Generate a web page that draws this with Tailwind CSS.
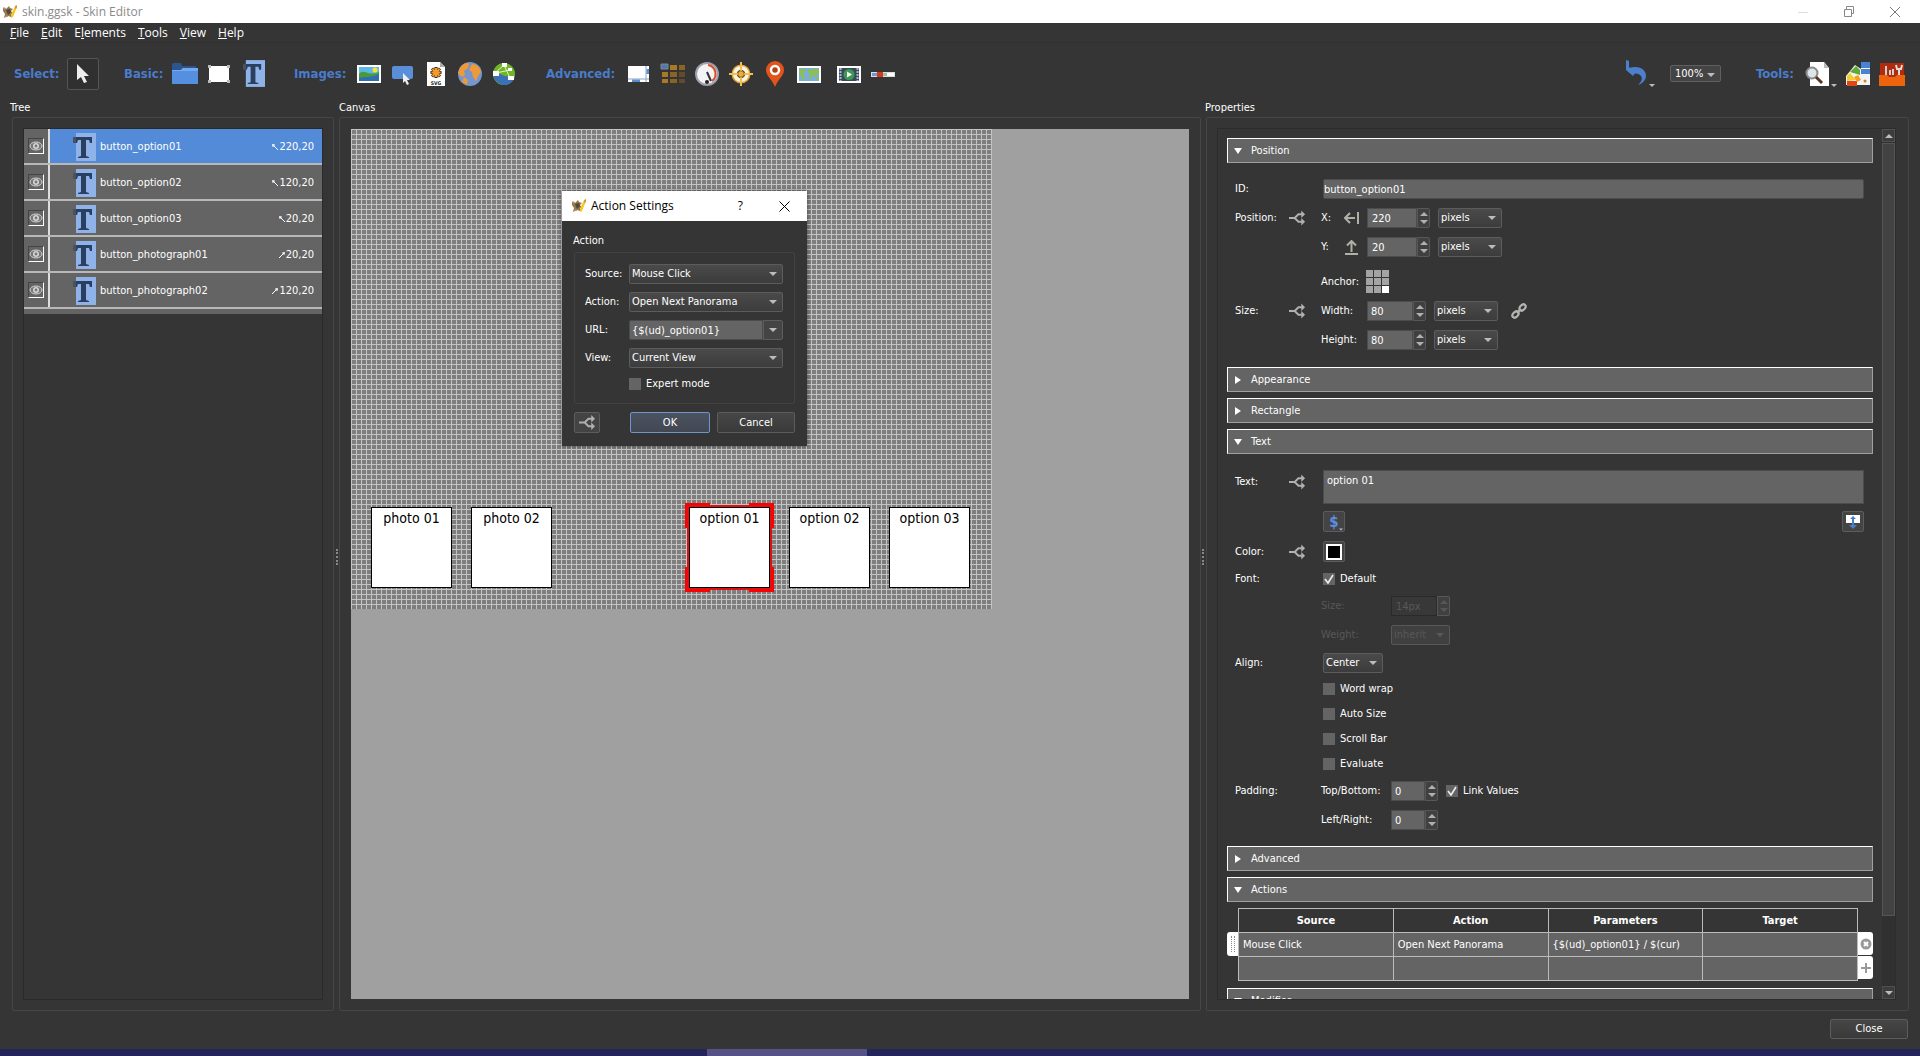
<!DOCTYPE html>
<html lang="en">
<head>
<meta charset="utf-8">
<title>skin.ggsk - Skin Editor</title>
<script src="https://cdn.jsdelivr.net/npm/@tailwindcss/browser@4"></script>
</head>
<body class="flex h-screen flex-col overflow-hidden bg-[#353535] font-['DejaVu_Sans_Condensed','DejaVu_Sans',sans-serif] text-[11px] leading-4 text-white">

<!-- Shared symbols -->
<svg class="hidden">
  <symbol id="logo" viewBox="0 0 16 14"><path d="M1 3l3 1 3-3 1 2 3 1-2 2 3 4-3-1v3l-3-1-4 2 1-4-2-3z" fill="#94784e"/><path d="M4 5l4-1 1 3-3 3z" fill="#54463a"/><path d="M1 2l3 1-1 2zM2 12l3-2 1 2z" fill="#b09468"/><path d="M9 10l4-9 2 1-4 10-2 1z" fill="#f4c820"/><path d="M13 1l2-1v3l-2 1z" fill="#d99a2c"/></symbol>
  <symbol id="tee" viewBox="0 0 24 28"><path d="M4 0h20v28H4z" fill="#8fb2e8"/><path d="M4 4h16v6h-2l-1-3h-3v16l3 1v1H6v-1l3-1V7H6l-1 3H1V4z" fill="#2b3f60"/><path d="M1 4h3v6H1z" fill="#4a5260"/></symbol>
  <symbol id="eye" viewBox="0 0 14 10"><ellipse cx="7" cy="5" rx="6" ry="4" fill="#777" stroke="#d4d4d4"/><circle cx="7" cy="5" r="3" fill="#d4d4d4"/><circle cx="7" cy="5" r="1.4" fill="#777"/></symbol>
  <symbol id="down" viewBox="0 0 8 4"><path d="M0 0h8L4 4z" fill="#bcbcbc"/></symbol>
  <symbol id="spin" viewBox="0 0 8 14"><path d="M0 5h8L4 1zM0 9h8l-4 4z" fill="#b0b0b0"/></symbol>
  <symbol id="branch" viewBox="0 0 18 16"><path d="M0 8h6l4-4h5M6 8l4 4h5" fill="none" stroke="#b0b0b0" stroke-width="2"/><path d="M13 0l4 4-4 4zM13 8l4 4-4 4z" fill="#b0b0b0"/></symbol>
  <symbol id="tri-down" viewBox="0 0 8 8"><path d="M0 1h8L4 7z" fill="#fff"/></symbol>
  <symbol id="tri-right" viewBox="0 0 8 8"><path d="M1 0l6 4-6 4z" fill="#fff"/></symbol>
  <symbol id="nw" viewBox="0 0 6 6"><path d="M1 1l5 5M0 1h3M1 0v3" stroke="#fff" fill="none"/></symbol>
  <symbol id="ne" viewBox="0 0 6 6"><path d="M5 1L0 6M6 1H3M5 0v3" stroke="#fff" fill="none"/></symbol>
  <symbol id="tick" viewBox="0 0 10 10"><path d="M1 5l3 4 5-8" stroke="#eee" stroke-width="1.6" fill="none"/></symbol>
</svg>

<!-- Title bar -->
<header class="flex h-[23px] shrink-0 items-center bg-white pr-5 font-['Open_Sans',sans-serif] text-[12px] text-[#8a8a8a]">
  <svg class="ml-[2px] h-[14px] w-4"><use href="#logo"/></svg>
  <h1 class="ml-1 flex-1">skin.ggsk - Skin Editor</h1>
  <button aria-label="Minimize" class="mr-9"><svg class="h-[10px] w-[10px]"><path d="M0 5.500h10" stroke="#ddd"/></svg></button>
  <button aria-label="Restore" class="mr-9"><svg class="h-[11px] w-[10px]" fill="none" stroke="#888"><path d="M.5 3.500h7v7h-7zM2.500 3V.5h7v7H8"/></svg></button>
  <button aria-label="Close window"><svg class="h-[10px] w-[10px]" stroke="#777"><path d="M0 0l10 10M10 0L0 10"/></svg></button>
</header>

<!-- Menu bar -->
<nav class="flex h-[20px] shrink-0 items-center gap-3 border-b border-[#303030] pl-[10px] font-['Open_Sans',sans-serif] text-[12px]">
  <a href="#"><u>F</u>ile</a><a href="#"><u>E</u>dit</a><a href="#">E<u>l</u>ements</a><a href="#"><u>T</u>ools</a><a href="#"><u>V</u>iew</a><a href="#"><u>H</u>elp</a>
</nav>

<!-- Toolbar -->
<div class="flex h-[59px] shrink-0 items-center pt-[2px] pr-[15px] pl-[14px] text-[13px] font-bold text-[#4a7ccc]">
  <span class="w-[53px]">Select:</span>
  <button aria-label="Select" class="mr-[25px] flex size-8 items-center justify-center rounded-[2px] border border-[#555] bg-[#303030]"><svg class="h-5 w-4" viewBox="0 0 16 20"><path d="M2 0l12 12H9l3 6-3 1-3-6-4 3z" fill="#eee"/></svg></button>
  <span class="w-[44px]">Basic:</span>
  <button aria-label="Container" class="flex w-[34px] justify-center"><svg class="size-[26px]" viewBox="0 0 26 26"><path d="M0 4l1-2h8l1 3h14v6H0z" fill="#2c5590"/><path d="M0 9h9l2-2h15v16H0z" fill="#5590e0"/><path d="M0 9h9l2-2h15v3H0z" fill="#76a8ec"/></svg></button>
  <button aria-label="Rectangle" class="flex w-[34px] justify-center"><svg class="size-[26px]" viewBox="0 0 26 26"><path d="M3 5h20v16H3z" fill="#fff"/><path d="M2 4h3v3H2zM21 4h3v3h-3zM2 19h3v3H2zM21 19h3v3h-3z" fill="#bbb"/></svg></button>
  <button aria-label="Text" class="mr-6 flex w-[34px] justify-center"><svg class="h-[27px] w-[23px]"><use href="#tee"/></svg></button>
  <span class="w-[58px]">Images:</span>
  <button aria-label="Image" class="flex w-[34px] justify-center"><svg class="size-[26px]" viewBox="0 0 26 26"><path d="M1 4h24v18H1z" fill="#fff"/><path d="M3 6h20v14H3z" fill="#5cb9e6"/><path d="M3 13c5-6 8 3 20-2v9H3z" fill="#4a9a3c"/><path d="M3 17c7-2 12 0 20-4v7H3z" fill="#2e6fb0"/><circle cx="19" cy="9" r="2.500" fill="#f8e23a"/></svg></button>
  <button aria-label="Button" class="flex w-[33px] justify-center"><svg class="size-[26px]" viewBox="0 0 26 26"><rect x="2" y="5" width="21" height="13" rx="2" fill="#5b8ed8"/><path d="M13 12l7 7h-3l2 4-2 1-2-4-2 2z" fill="#eee"/></svg></button>
  <button aria-label="SVG" class="flex w-[34px] justify-center"><svg class="size-[26px]" viewBox="0 0 26 26"><path d="M4 1h13l5 5v19H4z" fill="#fff"/><path d="M17 1l5 5h-5z" fill="#aaa"/><g stroke="#3a2a10" stroke-width="3"><path d="M13 6v11M7.500 11.500h11M9 7.500l8 8M17 7.500l-8 8"/></g><g stroke="#f59a2c" stroke-width="2"><path d="M13 7v9M8.500 11.500h9M9.500 8l7 7M16.500 8l-7 7"/></g><text x="13" y="23.500" text-anchor="middle" font-size="5" font-weight="bold" fill="#222">SVG</text></svg></button>
  <button aria-label="External image" class="flex w-[34px] justify-center"><svg class="size-[26px]" viewBox="0 0 26 26"><circle cx="13" cy="13" r="12" fill="#7596cc"/><path d="M3 7c3-5 8-6 9-4l-1 4-4 3 1 4-3 2-4-4zM15 3c5 0 8 4 9 8l-3 4-2 5-3-4-1-5-3-2zM7 16l4 3-1 5-5-3z" fill="#ef9a36"/></svg></button>
  <button aria-label="Panorama link" class="mr-[25px] flex w-[34px] justify-center"><svg class="size-[26px]" viewBox="0 0 26 26"><circle cx="13" cy="13" r="11" fill="#6fb52c"/><path d="M2 13c5-3 8 1 12 2s6-1 10 1c-2 6-7 8-11 8S3 20 2 13z" fill="#3a70b8"/><path d="M4 12l9-8 6 13M5 12l14-3" stroke="#e8f5b0" fill="none"/><path d="M2 10h6v5H2zM11 2h5v4h-5zM17 15h6v4h-6zM17 7h4v3h-4z" fill="#fff"/></svg></button>
  <span class="w-[76px]">Advanced:</span>
  <button aria-label="Scroll area" class="flex w-[34px] justify-center"><svg class="size-[26px]" viewBox="0 0 26 26"><path d="M2 5h21v16H2z" fill="#fff"/><path d="M20 5v16M2 18h21" stroke="#8ca4c8"/><path d="M6 18.500h8V21H6zM20.500 8H23v5h-2.500z" fill="#5a8ed4"/></svg></button>
  <button aria-label="Cloner" class="flex w-[34px] justify-center"><svg class="size-[26px]" viewBox="0 0 26 26"><path d="M1 3h7v5H1z" fill="#4a78b8" stroke="#888"/><path d="M10 4h7v5h-7zM2 11h6v5H2zM2 18h6v4H2z" fill="#a87a28"/><path d="M19 4h6v5h-6zM10 11h7v5h-7zM10 18h7v4h-7z" fill="#8a6424"/><path d="M19 11h6v5h-6zM19 18h6v4h-6z" fill="#64492a"/></svg></button>
  <button aria-label="Timer" class="flex w-[34px] justify-center"><svg class="size-[26px]" viewBox="0 0 26 26"><circle cx="13" cy="13" r="11" fill="#f4f4f4" stroke="#9da0ae" stroke-width="2"/><path d="M14 4a9 9 0 0 1 4 16" fill="none" stroke="#d8512a" stroke-width="2"/><path d="M13 11l4 9" stroke="#333" stroke-width="2"/><circle cx="13" cy="21" r="2" fill="#222"/></svg></button>
  <button aria-label="Hotspot" class="flex w-[34px] justify-center"><svg class="size-[26px]" viewBox="0 0 26 26"><circle cx="13" cy="13" r="8.500" fill="none" stroke="#e0a23a" stroke-width="2"/><circle cx="13" cy="13" r="6" fill="none" stroke="#fff5dc" stroke-width="4"/><path d="M13 1v24M1 13h24" stroke="#eec050" stroke-width="2"/><circle cx="13" cy="13" r="3" fill="#e6b040" stroke="#b87818"/></svg></button>
  <button aria-label="Map pin" class="flex w-[34px] justify-center"><svg class="size-[26px]" viewBox="0 0 26 26"><path d="M13 0a9 9 0 0 1 9 9c0 6-6 9-9 17C10 18 4 15 4 9a9 9 0 0 1 9-9z" fill="#e2541c"/><circle cx="13" cy="9" r="4" fill="#b83e10" stroke="#fff" stroke-width="2.500"/></svg></button>
  <button aria-label="Map" class="mr-[6px] flex w-[34px] justify-center"><svg class="size-[26px]" viewBox="0 0 26 26"><path d="M1 5h24v17H1z" fill="#fff"/><path d="M3 7h20v13H3z" fill="#7aaede"/><path d="M4 8h6l-1 3-2 1 2 3-1 4-2-1-1-4-2-2zM12 8l3 1 3-1h5v4l-2 1-1 4-2-3-2 1-1 4-2-3 1-3-2-2zM20 17l3-1v3h-2z" fill="#8cc152"/></svg></button>
  <button aria-label="Video" class="flex w-[34px] justify-center"><svg class="size-[26px]" viewBox="0 0 26 26"><path d="M1 5h24v17H1z" fill="#fff"/><path d="M3 7h20v13H3z" fill="#3a4858"/><path d="M4.500 7v13M21.500 7v13" stroke="#a8b8cc" stroke-width="2" stroke-dasharray="2 1"/><circle cx="13" cy="13.500" r="5.500" fill="#3a9a54"/><path d="M11 10.500l5 3-5 3z" fill="#fff"/></svg></button>
  <button aria-label="Seekbar" class="flex w-[34px] justify-center"><svg class="size-[26px]" viewBox="0 0 26 26"><path d="M1 11h24v5H1z" fill="#ddd"/><path d="M17 12h7v3h-7z" fill="#fff"/><path d="M2 12h6v3H2z" fill="#6a9ad8"/><path d="M7 11h6v5H7z" fill="#d43a1a"/><path d="M13 12h4v3h-4z" fill="#9cc0a0"/></svg></button>
  <span class="flex-1"></span>
  <button aria-label="Undo" class="mr-[15px] flex items-end"><svg class="h-[27px] w-[24px]" viewBox="0 0 24 27"><path d="M4 8c11-3 17 2 17 8 0 4-4 8-8 9 3-3 5-6 3-9-2-3-6-3-9-2z" fill="#4d80cc"/><path d="M1 0l3 1v6l6 6-2 3L1 10z" fill="#4d80cc"/></svg><svg class="h-[3px] w-[6px]"><use href="#down"/></svg></button>
  <span class="relative mr-[35px]"><select aria-label="Zoom" class="h-[17px] w-[51px] appearance-none rounded-[2px] border border-[#606060] bg-[#444] pl-1 text-[11px] leading-3 font-normal text-white"><option>100%</option></select><svg class="pointer-events-none absolute top-2 right-[6px] h-1 w-2"><use href="#down"/></svg></span>
  <span class="w-[49px]">Tools:</span>
  <button aria-label="Preview" class="mr-2 flex items-end"><svg class="size-[26px]" viewBox="0 0 26 26"><path d="M5 1h14l5 6v18H5z" fill="#fff"/><path d="M19 1l5 6h-5z" fill="#bbb"/><circle cx="7" cy="12" r="5.500" fill="#dde4ea" stroke="#8a8a8a" stroke-width="2"/><path d="M11 16l6 6" stroke="#5a3420" stroke-width="3"/></svg><svg class="h-[3px] w-[6px]"><use href="#down"/></svg></button>
  <button aria-label="Colors" class="mr-2"><svg class="size-[26px]" viewBox="0 0 26 26"><path d="M16 1h9v23H1v-9L10 4l6 4z" fill="#f4f4f4"/><path d="M16 1h9v6h-9zM16 8h9v5h-9z" fill="#4a84d0"/><path d="M5 11l6-6 4 4v5z" fill="#5cab34"/><path d="M2 15l3-3 6 7-9 1z" fill="#f2cc30"/><path d="M2 20h10v5H2z" fill="#e0451c"/><path d="M9 16l4-2 3 5-4 2z" fill="#f6a020"/><circle cx="20" cy="20" r="1.500" fill="#c88a20"/></svg></button>
  <button aria-label="Toolbox"><svg class="size-[26px]" viewBox="0 0 26 26"><path d="M1 2h24v14H1z" fill="#b02c0c"/><path d="M0 14h8l2 2h6l2-2h8v11H0z" fill="#ee640c"/><path d="M7 5v9M11 9v5M14 8v6" stroke="#d0d0d0" stroke-width="2"/><path d="M17 4l1 4h4l1-4M20 8v6" stroke="#dcdcdc" stroke-width="2" fill="none"/></svg></button>
</div>

<!-- Panels -->
<main class="flex min-h-0 flex-1 pr-[11px] pl-[10px]">

  <!-- Tree -->
  <section class="flex w-[324px] shrink-0 flex-col">
    <h2 class="mb-[2px] h-[13px] shrink-0 leading-[12px]">Tree</h2>
    <div class="ml-[2px] flex flex-1 rounded-[2px] border border-[#464646] p-[10px]">
      <div class="flex-1 border border-[#2a2a2a]">
        <ul class="border-b-[5px] border-[#646464] bg-[#646464]">
          <li class="flex h-9 items-stretch border-b-2 border-[#b8b8b8]"><span class="flex w-[26px] shrink-0 items-center justify-center border-r-2 border-[#ddd]"><button aria-label="Toggle visibility" class="border border-t-[#444] border-r-white border-b-white border-l-[#444]"><svg class="size-[14px]"><use href="#eye"/></svg></button></span><span class="flex flex-1 items-center bg-[#548bd8] pt-[2px] pr-2 pl-[22px]"><svg class="mr-1 h-7 w-6"><use href="#tee"/></svg><span class="flex-1">button_option01</span><svg class="mr-px size-[6px]"><use href="#nw"/></svg>220,20</span></li>
          <li class="flex h-9 items-stretch border-b-2 border-[#b8b8b8]"><span class="flex w-[26px] shrink-0 items-center justify-center border-r-2 border-[#ddd]"><button aria-label="Toggle visibility" class="border border-t-[#444] border-r-white border-b-white border-l-[#444]"><svg class="size-[14px]"><use href="#eye"/></svg></button></span><span class="flex flex-1 items-center pt-[2px] pr-2 pl-[22px]"><svg class="mr-1 h-7 w-6"><use href="#tee"/></svg><span class="flex-1">button_option02</span><svg class="mr-px size-[6px]"><use href="#nw"/></svg>120,20</span></li>
          <li class="flex h-9 items-stretch border-b-2 border-[#b8b8b8]"><span class="flex w-[26px] shrink-0 items-center justify-center border-r-2 border-[#ddd]"><button aria-label="Toggle visibility" class="border border-t-[#444] border-r-white border-b-white border-l-[#444]"><svg class="size-[14px]"><use href="#eye"/></svg></button></span><span class="flex flex-1 items-center pt-[2px] pr-2 pl-[22px]"><svg class="mr-1 h-7 w-6"><use href="#tee"/></svg><span class="flex-1">button_option03</span><svg class="mr-px size-[6px]"><use href="#nw"/></svg>20,20</span></li>
          <li class="flex h-9 items-stretch border-b-2 border-[#b8b8b8]"><span class="flex w-[26px] shrink-0 items-center justify-center border-r-2 border-[#ddd]"><button aria-label="Toggle visibility" class="border border-t-[#444] border-r-white border-b-white border-l-[#444]"><svg class="size-[14px]"><use href="#eye"/></svg></button></span><span class="flex flex-1 items-center pt-[2px] pr-2 pl-[22px]"><svg class="mr-1 h-7 w-6"><use href="#tee"/></svg><span class="flex-1">button_photograph01</span><svg class="mr-px size-[6px]"><use href="#ne"/></svg>20,20</span></li>
          <li class="flex h-9 items-stretch border-b-2 border-[#b8b8b8]"><span class="flex w-[26px] shrink-0 items-center justify-center border-r-2 border-[#ddd]"><button aria-label="Toggle visibility" class="border border-t-[#444] border-r-white border-b-white border-l-[#444]"><svg class="size-[14px]"><use href="#eye"/></svg></button></span><span class="flex flex-1 items-center pt-[2px] pr-2 pl-[22px]"><svg class="mr-1 h-7 w-6"><use href="#tee"/></svg><span class="flex-1">button_photograph02</span><svg class="mr-px size-[6px]"><use href="#ne"/></svg>120,20</span></li>
        </ul>
      </div>
    </div>
  </section>

  <div class="flex w-[5px] shrink-0 items-center justify-center"><span class="h-4 border-l-2 border-dotted border-[#888]"></span></div>

  <!-- Canvas -->
  <section class="flex min-w-0 flex-1 flex-col">
    <h2 class="mb-[2px] h-[13px] shrink-0 leading-[12px]">Canvas</h2>
    <div class="flex flex-1 rounded-[2px] border border-[#464646] p-[11px]">
      <div class="relative flex-1 bg-[#a0a0a0]">
        <svg class="absolute top-0 left-0 h-[480px] w-[641px]">
          <defs><pattern id="grid" width="5" height="5" patternUnits="userSpaceOnUse"><path d="M0 0h5v5H0z" fill="#7e7e7e"/><path d="M0 .5h5M.5 0v5" stroke="#c4c4c4"/></pattern></defs>
          <rect width="641" height="480" fill="url(#grid)"/>
        </svg>
        <div class="absolute top-[378px] left-[20px] h-[81px] w-[81px] border border-black bg-white pt-[2px] text-center text-[14px] text-black">photo 01</div>
        <div class="absolute top-[378px] left-[120px] h-[81px] w-[81px] border border-black bg-white pt-[2px] text-center text-[14px] text-black">photo 02</div>
        <svg class="absolute top-[374px] left-[334px] h-[89px] w-[89px]" viewBox="0 0 89 89" fill="#f00"><path d="M0 0h25v4H0zM64 0h25v4H64zM0 85h25v4H0zM64 85h25v4H64zM0 0h4v25H0zM85 0h4v25h-4zM0 64h4v25H0zM85 64h4v25h-4z"/><path d="M3 3h83v83H3z" fill="none" stroke="#e01010" stroke-width="2"/></svg>
        <div class="absolute top-[378px] left-[338px] h-[81px] w-[81px] border border-black bg-white pt-[2px] text-center text-[14px] text-black">option 01</div>
        <div class="absolute top-[378px] left-[438px] h-[81px] w-[81px] border border-black bg-white pt-[2px] text-center text-[14px] text-black">option 02</div>
        <div class="absolute top-[378px] left-[538px] h-[81px] w-[81px] border border-black bg-white pt-[2px] text-center text-[14px] text-black">option 03</div>

        <!-- Action Settings dialog -->
        <div role="dialog" aria-label="Action Settings" class="absolute top-[62px] left-[211px] w-[245px] bg-[#353535] pb-[13px] shadow-[0_0_4px_rgba(0,0,0,0.5)]">
          <div class="flex h-[30px] items-center bg-white pr-[17px] pl-[9px] font-['Open_Sans',sans-serif] text-[12px] text-black">
            <svg class="mr-1 h-[14px] w-4"><use href="#logo"/></svg><span class="flex-1">Action Settings</span>
            <button aria-label="Help" class="mr-9">?</button>
            <button aria-label="Close dialog"><svg class="size-[11px]" stroke="#000"><path d="M.5.5l10 10M10.500.5l-10 10"/></svg></button>
          </div>
          <div class="px-3 pt-3">
            <div class="mb-[3px] -ml-px">Action</div>
            <div class="rounded-[2px] border border-[#424242] pt-[11px] pr-[11px] pb-[11px] pl-[10px]">
              <div class="grid grid-cols-[44px_1fr] items-center gap-y-2">
                <label for="d1">Source:</label><span class="relative"><select id="d1" class="block h-5 w-full appearance-none rounded-[2px] border border-[#5c5c5c] bg-linear-to-b from-[#4a4a4a] to-[#3c3c3c] pl-[2px]"><option>Mouse Click</option></select><svg class="pointer-events-none absolute top-2 right-[6px] h-1 w-2"><use href="#down"/></svg></span>
                <label for="d2">Action:</label><span class="relative"><select id="d2" class="block h-5 w-full appearance-none rounded-[2px] border border-[#5c5c5c] bg-linear-to-b from-[#4a4a4a] to-[#3c3c3c] pl-[2px]"><option>Open Next Panorama</option></select><svg class="pointer-events-none absolute top-2 right-[6px] h-1 w-2"><use href="#down"/></svg></span>
                <label for="d3">URL:</label><span class="flex"><input id="d3" value="{$(ud)_option01}" class="h-5 w-0 flex-1 rounded-l-[2px] border border-[#4c4c4c] bg-[#646464] pl-[2px]"><button aria-label="URL list" class="flex h-5 w-5 items-center justify-center rounded-r-[2px] border border-[#5c5c5c] bg-[#444]"><svg class="h-1 w-2"><use href="#down"/></svg></button></span>
                <label for="d4">View:</label><span class="relative"><select id="d4" class="block h-5 w-full appearance-none rounded-[2px] border border-[#5c5c5c] bg-linear-to-b from-[#4a4a4a] to-[#3c3c3c] pl-[2px]"><option>Current View</option></select><svg class="pointer-events-none absolute top-2 right-[6px] h-1 w-2"><use href="#down"/></svg></span>
              </div>
              <label class="mt-2 ml-[44px] flex items-center gap-[5px]"><input type="checkbox" class="size-3 appearance-none bg-[#646464]">Expert mode</label>
            </div>
            <div class="mt-2 flex">
              <button aria-label="Logic" class="mr-[30px] flex h-[21px] w-[26px] items-center justify-center rounded-[2px] border border-[#5c5c5c] bg-[#444]"><svg class="h-[15px] w-[17px]"><use href="#branch"/></svg></button>
              <button class="mr-[7px] h-[21px] w-20 rounded-[2px] border border-[#7094cc] bg-linear-to-b from-[#4c5360] to-[#414853]">OK</button>
              <button class="h-[21px] flex-1 rounded-[2px] border border-[#5c5c5c] bg-linear-to-b from-[#464646] to-[#3a3a3a]">Cancel</button>
            </div>
          </div>
        </div>
      </div>
    </div>
  </section>

  <div class="flex w-[4px] shrink-0 items-center justify-center"><span class="h-4 border-l-2 border-dotted border-[#888]"></span></div>

  <!-- Properties -->
  <section class="flex w-[704px] shrink-0 flex-col">
    <h2 class="mb-[2px] h-[13px] shrink-0 leading-[12px]">Properties</h2>
    <div class="ml-[1px] flex min-h-0 flex-1 rounded-[2px] border border-[#464646] pt-[10px] pr-3 pb-[10px] pl-[10px]">
      <div class="flex min-h-0 min-w-0 flex-1 border border-[#2c2c2c]">
        <div class="min-w-0 flex-1 overflow-hidden pt-[9px] pr-[9px] pl-[9px]">

          <h3 class="flex h-[25px] items-center border border-t-white border-r-[#a0a0a0] border-b-[#a0a0a0] border-l-white bg-[#646464] pl-[6px]"><svg class="mr-[9px] size-2"><use href="#tri-down"/></svg>Position</h3>
          <div class="px-[9px] pt-4 pb-[17px] pl-[8px]">
            <div class="flex h-5 items-center"><label for="pid" class="w-[88px]">ID:</label><input id="pid" value="button_option01" class="h-5 flex-1 rounded-[2px] border border-[#4c4c4c] bg-[#646464]"></div>
            <div class="mt-[9px] flex h-5 items-center"><span class="w-[54px]">Position:</span><button aria-label="Position logic" class="w-8"><svg class="h-4 w-[17px]"><use href="#branch"/></svg></button><label for="px" class="w-[23px]">X:</label><svg class="mr-2 h-3 w-[15px]" fill="none" stroke="#b0b0a8" stroke-width="2"><path d="M1 6h10M6 1L1 6l5 5M14 0v12"/></svg><input id="px" value="220" class="h-5 w-[50px] border border-[#4c4c4c] bg-[#646464] pl-1"><span class="mr-2 flex h-5 w-[13px] items-center justify-center rounded-r-[2px] border border-[#585858] bg-[#404040]"><svg class="h-[14px] w-2"><use href="#spin"/></svg></span><span class="relative"><select aria-label="X unit" class="block h-5 w-16 appearance-none rounded-[2px] border border-[#5c5c5c] bg-linear-to-b from-[#4a4a4a] to-[#3c3c3c] pl-[2px]"><option>pixels</option></select><svg class="pointer-events-none absolute top-2 right-[6px] h-1 w-2"><use href="#down"/></svg></span></div>
            <div class="mt-[9px] flex h-5 items-center"><label for="py" class="ml-[86px] w-[23px]">Y:</label><svg class="mr-2 h-[15px] w-[15px]" fill="none" stroke="#b0b0a8" stroke-width="2"><path d="M7.500 12V1M3 5.500L7.500 1 12 5.500M1 14h13"/></svg><input id="py" value="20" class="h-5 w-[50px] border border-[#4c4c4c] bg-[#646464] pl-1"><span class="mr-2 flex h-5 w-[13px] items-center justify-center rounded-r-[2px] border border-[#585858] bg-[#404040]"><svg class="h-[14px] w-2"><use href="#spin"/></svg></span><span class="relative"><select aria-label="Y unit" class="block h-5 w-16 appearance-none rounded-[2px] border border-[#5c5c5c] bg-linear-to-b from-[#4a4a4a] to-[#3c3c3c] pl-[2px]"><option>pixels</option></select><svg class="pointer-events-none absolute top-2 right-[6px] h-1 w-2"><use href="#down"/></svg></span></div>
            <div class="mt-[13px] flex h-6 items-center"><span class="ml-[86px] w-[45px]">Anchor:</span><svg class="h-6 w-6"><path d="M0 0h7v7H0zM8 0h7v7H8zM16 0h7v7h-7zM0 8h7v7H0zM8 8h7v7H8zM16 8h7v7h-7zM0 16h7v7H0zM8 16h7v7H8z" fill="#a4a4a4"/><path d="M16 16h7v7h-7z" fill="#fff"/></svg></div>
            <div class="mt-[7px] flex h-5 items-center"><span class="w-[54px]">Size:</span><button aria-label="Size logic" class="w-8"><svg class="h-4 w-[17px]"><use href="#branch"/></svg></button><label for="pw" class="w-[46px]">Width:</label><input id="pw" value="80" class="h-5 w-[46px] border border-[#4c4c4c] bg-[#646464] pl-[3px]"><span class="mr-2 flex h-5 w-[13px] items-center justify-center rounded-r-[2px] border border-[#585858] bg-[#404040]"><svg class="h-[14px] w-2"><use href="#spin"/></svg></span><span class="relative"><select aria-label="Width unit" class="block h-5 w-16 appearance-none rounded-[2px] border border-[#5c5c5c] bg-linear-to-b from-[#4a4a4a] to-[#3c3c3c] pl-[2px]"><option>pixels</option></select><svg class="pointer-events-none absolute top-2 right-[6px] h-1 w-2"><use href="#down"/></svg></span><button aria-label="Link size" class="ml-[13px]"><svg class="size-4" fill="none" stroke="#b4b4b0" stroke-width="2.200"><ellipse cx="11.500" cy="4.500" rx="3.600" ry="2.400" transform="rotate(-45 11.500 4.500)"/><ellipse cx="4.500" cy="11.500" rx="3.600" ry="2.400" transform="rotate(-45 4.500 11.500)"/><path d="M6 10l4-4"/></svg></button></div>
            <div class="mt-[9px] flex h-5 items-center"><label for="ph" class="ml-[86px] w-[46px]">Height:</label><input id="ph" value="80" class="h-5 w-[46px] border border-[#4c4c4c] bg-[#646464] pl-[3px]"><span class="mr-2 flex h-5 w-[13px] items-center justify-center rounded-r-[2px] border border-[#585858] bg-[#404040]"><svg class="h-[14px] w-2"><use href="#spin"/></svg></span><span class="relative"><select aria-label="Height unit" class="block h-5 w-16 appearance-none rounded-[2px] border border-[#5c5c5c] bg-linear-to-b from-[#4a4a4a] to-[#3c3c3c] pl-[2px]"><option>pixels</option></select><svg class="pointer-events-none absolute top-2 right-[6px] h-1 w-2"><use href="#down"/></svg></span></div>
          </div>

          <h3 class="mb-[6px] flex h-[25px] items-center border border-t-white border-r-[#a0a0a0] border-b-[#a0a0a0] border-l-white bg-[#646464] pl-[6px]"><svg class="mr-[9px] size-2"><use href="#tri-right"/></svg>Appearance</h3>
          <h3 class="mb-[6px] flex h-[25px] items-center border border-t-white border-r-[#a0a0a0] border-b-[#a0a0a0] border-l-white bg-[#646464] pl-[6px]"><svg class="mr-[9px] size-2"><use href="#tri-right"/></svg>Rectangle</h3>
          <h3 class="flex h-[25px] items-center border border-t-white border-r-[#a0a0a0] border-b-[#a0a0a0] border-l-white bg-[#646464] pl-[6px]"><svg class="mr-[9px] size-2"><use href="#tri-down"/></svg>Text</h3>
          <div class="pt-4 pr-[9px] pb-4 pl-[8px]">
            <div class="flex h-[34px]"><label for="pt" class="mt-1 w-[54px]">Text:</label><button aria-label="Text logic" class="mt-1 w-[34px] self-start"><svg class="h-4 w-[17px]"><use href="#branch"/></svg></button><textarea id="pt" class="h-[34px] flex-1 resize-none border border-[#4c4c4c] bg-[#646464] pt-[2px] pl-[3px]">option 01</textarea></div>
            <div class="mt-[7px] ml-[88px] flex justify-between"><button aria-label="Placeholders" class="flex h-[21px] w-[22px] items-center justify-center rounded-[2px] border border-[#5c5c5c] bg-[#444] text-[15px] font-bold text-[#5a8ee0]">$<svg class="-mr-1 h-[3px] w-1 self-end"><use href="#down"/></svg></button><button aria-label="Fit" class="flex h-[21px] w-[22px] items-center justify-center rounded-[2px] border border-[#5c5c5c] bg-[#444]"><svg class="h-[14px] w-[14px]"><path d="M0 0h14v8H0z" fill="#fff"/><path d="M7 1l3 3H8v6h3l-4 4-4-4h3V4H4z" fill="#4a7ccc"/></svg></button></div>
            <div class="mt-[9px] flex h-[21px] items-center"><span class="w-[54px]">Color:</span><button aria-label="Color logic" class="w-[34px]"><svg class="h-4 w-[17px]"><use href="#branch"/></svg></button><button aria-label="Text color" class="flex h-[21px] w-[22px] items-center justify-center rounded-[2px] border border-[#5c5c5c] bg-[#444]"><span class="size-4 border-2 border-white bg-black"></span></button></div>
            <div class="mt-[9px] flex h-4 items-center"><span class="w-[88px]">Font:</span><label class="flex items-center"><span class="relative mr-[5px] size-3"><input type="checkbox" checked class="block size-3 appearance-none bg-[#646464]"><svg class="pointer-events-none absolute top-px left-px size-[10px]"><use href="#tick"/></svg></span>Default</label></div>
            <div class="mt-[9px] flex h-5 items-center text-[#585858]"><label for="fs" class="ml-[86px] w-[70px]">Size:</label><input id="fs" disabled value="14px" class="h-5 w-[46px] border border-[#2a2a2a] bg-[#383838] pl-1"><span class="flex h-5 w-[13px] items-center justify-center rounded-r-[2px] border border-[#585858] bg-[#404040]"><svg class="h-[14px] w-2 opacity-20"><use href="#spin"/></svg></span></div>
            <div class="mt-[9px] flex h-5 items-center text-[#585858]"><label for="fw" class="ml-[86px] w-[70px]">Weight:</label><span class="relative"><select id="fw" disabled class="block h-5 w-[59px] appearance-none rounded-[2px] border border-[#585858] bg-[#404040] pl-[2px] opacity-100"><option>inherit</option></select><svg class="pointer-events-none absolute top-2 right-[6px] h-1 w-2 opacity-20"><use href="#down"/></svg></span></div>
            <div class="mt-2 flex h-5 items-center"><label for="al" class="w-[88px]">Align:</label><span class="relative"><select id="al" class="block h-5 w-[60px] appearance-none rounded-[2px] border border-[#5c5c5c] bg-linear-to-b from-[#4a4a4a] to-[#3c3c3c] pl-[2px]"><option>Center</option></select><svg class="pointer-events-none absolute top-2 right-[6px] h-1 w-2"><use href="#down"/></svg></span></div>
            <div class="mt-2 ml-[88px] flex flex-col gap-[9px]">
              <label class="flex items-center gap-[5px]"><input type="checkbox" class="size-3 appearance-none bg-[#646464]">Word wrap</label>
              <label class="flex items-center gap-[5px]"><input type="checkbox" class="size-3 appearance-none bg-[#646464]">Auto Size</label>
              <label class="flex items-center gap-[5px]"><input type="checkbox" class="size-3 appearance-none bg-[#646464]">Scroll Bar</label>
              <label class="flex items-center gap-[5px]"><input type="checkbox" class="size-3 appearance-none bg-[#646464]">Evaluate</label>
            </div>
            <div class="mt-[9px] flex h-5 items-center"><span class="w-[86px]">Padding:</span><label for="tb" class="w-[70px]">Top/Bottom:</label><input id="tb" value="0" class="h-5 w-[34px] border border-[#4c4c4c] bg-[#646464] pl-[3px]"><span class="mr-2 flex h-5 w-[13px] items-center justify-center rounded-r-[2px] border border-[#585858] bg-[#404040]"><svg class="h-[14px] w-2"><use href="#spin"/></svg></span><label class="flex items-center"><span class="relative mr-[5px] size-3"><input type="checkbox" checked class="block size-3 appearance-none bg-[#646464]"><svg class="pointer-events-none absolute top-px left-px size-[10px]"><use href="#tick"/></svg></span>Link Values</label></div>
            <div class="mt-[9px] flex h-5 items-center"><label for="lr" class="ml-[86px] w-[70px]">Left/Right:</label><input id="lr" value="0" class="h-5 w-[34px] border border-[#4c4c4c] bg-[#646464] pl-[3px]"><span class="flex h-5 w-[13px] items-center justify-center rounded-r-[2px] border border-[#585858] bg-[#404040]"><svg class="h-[14px] w-2"><use href="#spin"/></svg></span></div>
          </div>

          <h3 class="mb-[6px] flex h-[25px] items-center border border-t-white border-r-[#a0a0a0] border-b-[#a0a0a0] border-l-white bg-[#646464] pl-[6px]"><svg class="mr-[9px] size-2"><use href="#tri-right"/></svg>Advanced</h3>
          <h3 class="flex h-[25px] items-center border border-t-white border-r-[#a0a0a0] border-b-[#a0a0a0] border-l-white bg-[#646464] pl-[6px]"><svg class="mr-[9px] size-2"><use href="#tri-down"/></svg>Actions</h3>
          <div class="mt-[6px] mb-[7px] flex">
            <div class="w-[11px] shrink-0 pt-6"><button aria-label="Drag row" class="flex h-6 w-[11px] items-center justify-center rounded-l-[3px] bg-white"><span class="h-4 w-1 border-x border-dotted border-[#888]"></span></button></div>
            <table class="w-full min-w-0 table-fixed border-collapse">
              <thead><tr class="h-6"><th class="border border-[#bbb]">Source</th><th class="border border-[#bbb]">Action</th><th class="border border-[#bbb]">Parameters</th><th class="border border-[#bbb]">Target</th></tr></thead>
              <tbody class="bg-[#646464]">
                <tr class="h-6"><td class="border border-[#bbb] pl-1">Mouse Click</td><td class="border border-[#bbb] pl-1">Open Next Panorama</td><td class="border border-[#bbb] pl-1">{$(ud)_option01} / $(cur)</td><td class="border border-[#bbb]"></td></tr>
                <tr class="h-6"><td class="border border-[#bbb]"></td><td class="border border-[#bbb]"></td><td class="border border-[#bbb]"></td><td class="border border-[#bbb]"></td></tr>
              </tbody>
            </table>
            <div class="flex w-[15px] shrink-0 flex-col gap-px pt-6"><button aria-label="Delete action" class="flex h-[23px] items-center justify-center rounded-r-[3px] bg-white"><svg class="size-3"><circle cx="6" cy="6" r="5.500" fill="#999"/><path d="M4 4l4 4M8 4L4 8" stroke="#fff" stroke-width="2"/></svg></button><button aria-label="Add action" class="flex h-[23px] items-center justify-center rounded-r-[3px] bg-white"><svg class="size-3" stroke="#999" stroke-width="2"><path d="M6 1v10M1 6h10"/></svg></button></div>
          </div>
          <h3 class="flex h-[25px] items-center border border-t-white border-r-[#a0a0a0] border-b-[#a0a0a0] border-l-white bg-[#646464] pl-[6px]"><svg class="mr-[9px] size-2"><use href="#tri-down"/></svg>Modifier</h3>
        </div>
        <!-- Scroll bar -->
        <div class="flex w-[13px] shrink-0 flex-col bg-[#303030]">
          <button aria-label="Scroll up" class="flex h-[13px] items-center justify-center border border-[#505050] bg-[#3c3c3c]"><svg class="h-1 w-2 rotate-180"><use href="#down"/></svg></button>
          <div class="mt-px grow-[11] border border-[#555] bg-[#424242]"></div>
          <div class="grow"></div>
          <button aria-label="Scroll down" class="flex h-[13px] items-center justify-center border border-[#505050] bg-[#3c3c3c]"><svg class="h-1 w-2"><use href="#down"/></svg></button>
        </div>
      </div>
    </div>
  </section>
</main>

<footer class="flex h-[38px] shrink-0 justify-end pt-2 pr-3"><button class="h-5 w-[78px] rounded-[2px] border border-[#5c5c5c] bg-linear-to-b from-[#464646] to-[#3a3a3a]">Close</button></footer>
<div class="flex h-[7px] shrink-0 bg-[#23245c]"><span class="ml-[36.800%] w-40 bg-[#565286]"></span></div>
</body>
</html>
